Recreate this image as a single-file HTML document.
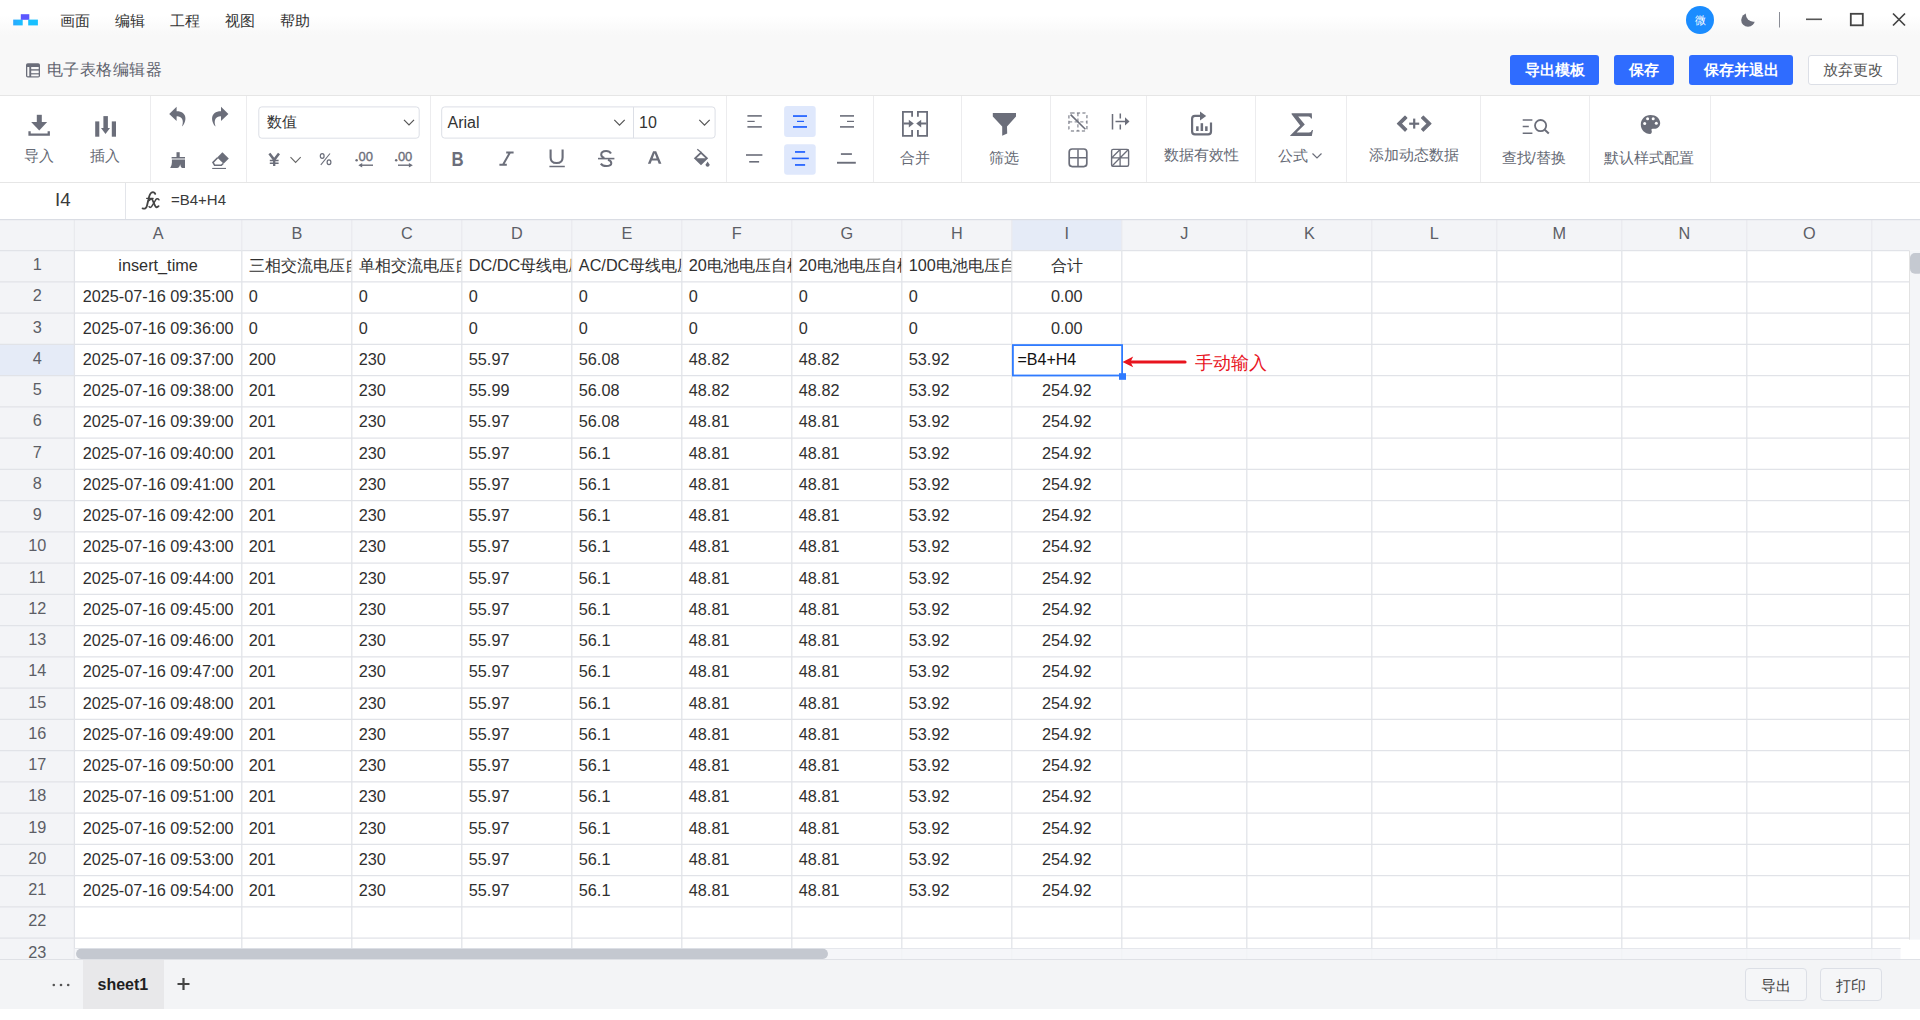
<!DOCTYPE html>
<html><head><meta charset="utf-8"><style>
*{margin:0;padding:0;box-sizing:border-box}
html,body{width:1920px;height:1020px;overflow:hidden;background:#fff;font-family:'Liberation Sans',sans-serif}
.a{position:absolute;white-space:nowrap}
.lbl{position:absolute;font-size:15px;color:#666a75;line-height:15px;white-space:nowrap}
.sep{position:absolute;top:96px;width:1px;height:86px;background:#ececee}
.btn{position:absolute;top:55px;height:30px;border-radius:3px;background:#2f6cff;color:#fff;font-size:15px;line-height:30px;text-align:center;font-weight:bold}
</style></head><body>

<div class="a" style="left:0;top:0;width:1920px;height:40px;background:linear-gradient(#ffffff 0%,#ffffff 38%,#f8f8f8 88%,#f8f8f8 100%)"></div>
<svg class="a" style="left:0;top:0" width="60" height="40">
<defs><linearGradient id="lg1" x1="0" x2="1"><stop offset="0" stop-color="#2aa8ff"/><stop offset="1" stop-color="#19c1ff"/></linearGradient></defs>
<rect x="13.2" y="19.6" width="9.5" height="5.8" fill="url(#lg1)"/>
<rect x="20.8" y="14.2" width="8.5" height="5.6" fill="#5b57ff"/>
<rect x="28.2" y="19.6" width="9.7" height="5.8" fill="#18c0ff"/>
</svg>
<div class="a" style="left:60px;top:13px;font-size:15px;line-height:16px;color:#333">画面</div>
<div class="a" style="left:115px;top:13px;font-size:15px;line-height:16px;color:#333">编辑</div>
<div class="a" style="left:170px;top:13px;font-size:15px;line-height:16px;color:#333">工程</div>
<div class="a" style="left:225px;top:13px;font-size:15px;line-height:16px;color:#333">视图</div>
<div class="a" style="left:280px;top:13px;font-size:15px;line-height:16px;color:#333">帮助</div>
<div class="a" style="left:1686px;top:6px;width:28px;height:28px;border-radius:50%;background:#1a8cff;color:#fff;font-size:11px;line-height:28px;text-align:center">微</div>
<svg class="a" style="left:1730px;top:5px" width="190" height="30">
<mask id="mm"><rect width="40" height="30" fill="#fff"/><circle cx="23.2" cy="9.4" r="7.3" fill="#000"/></mask><circle cx="18" cy="15" r="6.8" fill="#6b6e7a" mask="url(#mm)"/>
<rect x="49" y="7" width="1" height="15.5" fill="#8a8d96"/>
<rect x="76" y="13.5" width="16" height="1.6" fill="#555"/>
<rect x="120.8" y="8.8" width="12" height="11.5" fill="none" stroke="#444" stroke-width="1.8"/>
<path d="M163,8.5 L175,20.5 M175,8.5 L163,20.5" stroke="#444" stroke-width="1.7"/>
</svg>
<div class="a" style="left:0;top:40px;width:1920px;height:56px;background:#f8f8f8;border-bottom:1px solid #e6e6e6"></div>
<svg class="a" style="left:24px;top:61px" width="18" height="18">
<rect x="2" y="2.3" width="14" height="14.2" rx="1.8" fill="#6b6e7a"/>
<rect x="3.3" y="6" width="2" height="9.2" fill="#f8f8f8"/>
<rect x="7.2" y="6" width="7.5" height="2.2" fill="#f8f8f8"/>
<rect x="7.2" y="9.6" width="7.5" height="2.6" fill="#f8f8f8"/>
<rect x="7.2" y="13.4" width="7.5" height="1.9" fill="#f8f8f8"/>
</svg>
<div class="a" style="left:46.6px;top:60.5px;font-size:16.4px;letter-spacing:0.5px;line-height:17px;color:#5f636e">电子表格编辑器</div>
<div class="btn" style="left:1510px;width:89px">导出模板</div>
<div class="btn" style="left:1614px;width:60px">保存</div>
<div class="btn" style="left:1689px;width:104px">保存并退出</div>
<div class="a" style="left:1808px;top:55px;width:90px;height:30px;border-radius:3px;background:#fff;border:1px solid #dcdfe6;color:#555;font-size:15px;line-height:28px;text-align:center">放弃更改</div>
<div class="a" style="left:0;top:96px;width:1920px;height:87px;background:#fff;border-bottom:1px solid #e6e6e6"></div>
<div class="sep" style="left:150px"></div>
<div class="sep" style="left:246px"></div>
<div class="sep" style="left:430px"></div>
<div class="sep" style="left:726px"></div>
<div class="sep" style="left:873px"></div>
<div class="sep" style="left:961px"></div>
<div class="sep" style="left:1050px"></div>
<div class="sep" style="left:1146px"></div>
<div class="sep" style="left:1255px"></div>
<div class="sep" style="left:1346px"></div>
<div class="sep" style="left:1480px"></div>
<div class="sep" style="left:1589px"></div>
<div class="sep" style="left:1710px"></div>
<svg class="a" style="left:0;top:0" width="1920" height="183">
<g fill="#6b6e7a">
<!-- download -->
<rect x="36.8" y="114.8" width="5" height="8"/>
<polygon points="31.2,122 47.2,122 39.2,130.4"/>
<path d="M28.4,131.2 h2.3 v2.2 h16.9 v-2.2 h2.3 v4.6 h-21.5 z"/>
<!-- insert -->
<rect x="95.2" y="121.4" width="4.1" height="15.3"/>
<rect x="111.8" y="121.4" width="4.2" height="15.3"/>
<rect x="103.4" y="116.1" width="4.5" height="12.5"/>
<polygon points="101,128 110,128 105.5,134"/>
<!-- undo / redo -->
<path d="M176.6,106.8 L169.2,114 L176.6,121.1 L176.6,116.4 C180.8,116 184.6,119.5 182,126.6 C186.8,122 188,111.2 176.6,111.2 Z"/>
<path transform="translate(397.6,0) scale(-1,1)" d="M176.6,106.8 L169.2,114 L176.6,121.1 L176.6,116.4 C180.8,116 184.6,119.5 182,126.6 C186.8,122 188,111.2 176.6,111.2 Z"/>
<!-- brush -->
<rect x="176.5" y="152.2" width="3.2" height="5"/>
<rect x="171.6" y="157" width="13.4" height="1.5"/>
<path d="M171.9,159.4 H185 V168 H182.3 Q180.8,167.8 180.5,165.8 L180.2,164.2 Q179.5,167.6 177,168 H170.2 Q171.9,165.5 171.9,162.5 Z"/>
<!-- eraser -->
<polygon points="217.2,157.4 222.4,152.2 228.8,158.5 223.6,163.7"/>
<path d="M217.6,157.8 L213,162.5 L214.6,165.3 H221.3 L223.2,163.5" fill="none" stroke="#6b6e7a" stroke-width="1.6"/>
<rect x="212.2" y="167.9" width="13.8" height="1.1"/>
</g>
<!-- number format dropdown -->
<rect x="258.8" y="106.9" width="160.4" height="31.3" rx="3" fill="none" stroke="#dcdfe6" stroke-width="1"/>
<polyline points="404,119.8 409,125 414,119.8" fill="none" stroke="#555" stroke-width="1.2"/>
<!-- yen -->
<g stroke="#6b6e7a" fill="none">
<path d="M269.4,153.4 L274.2,159.8 L279,153.4" stroke-width="2.5"/>
<path d="M274.2,159.3 V166" stroke-width="2.3"/>
<path d="M269.8,160.4 H278.6 M269.8,163.2 H278.6" stroke-width="1.5"/>
<polyline points="290.5,157.2 295.6,162.4 300.7,157.2" stroke-width="1.1" stroke="#666"/>
<!-- percent -->
<ellipse cx="322.2" cy="156" rx="1.9" ry="2.4" stroke-width="1.2"/>
<ellipse cx="329" cy="162.2" rx="1.9" ry="2.4" stroke-width="1.2"/>
<path d="M320.8,164.8 L330,153.5" stroke-width="1.1"/>
<!-- decimal arrows -->
<path d="M361,165.2 H373" stroke-width="1.4"/>
<path d="M398,165.2 H410" stroke-width="1.4"/>
</g>
<g fill="#6b6e7a">
<polygon points="358.3,165.2 362.2,163 362.2,167.4"/>
<polygon points="412.8,165.2 408.9,163 408.9,167.4"/>
<circle cx="356.6" cy="160.2" r="1.25"/>
<circle cx="396.2" cy="160.2" r="1.25"/>
<text x="358.6" y="161.4" font-size="13" font-family="Liberation Sans" textLength="14.4" stroke="#6b6e7a" stroke-width="0.35">00</text>
<text x="397.9" y="161.4" font-size="13" font-family="Liberation Sans" textLength="14.4" stroke="#6b6e7a" stroke-width="0.35">00</text>
</g>
<!-- font / size dropdown -->
<rect x="441.7" y="106.9" width="273.4" height="31.2" rx="3" fill="none" stroke="#dcdfe6"/>
<rect x="633" y="107" width="1" height="31" fill="#dcdfe6"/>
<polyline points="614.3,119.8 619.5,125.2 624.7,119.8" fill="none" stroke="#555" stroke-width="1.2"/>
<polyline points="699.3,119.8 704.5,125.2 709.7,119.8" fill="none" stroke="#555" stroke-width="1.2"/>
<!-- B I U S A bucket -->
<text x="451.2" y="165.9" font-size="20" font-weight="bold" font-family="Liberation Sans" fill="#6b6e7a" transform="translate(451.6,0) scale(0.84,1) translate(-451.2,0)">B</text>
<g stroke="#6b6e7a" fill="none">
<path d="M506.2,152.4 H513.6 M499.4,164.8 H506.8 M510,152.4 L503,164.8" stroke-width="2"/>
<path d="M550.6,149.5 V157.4 C550.6,161.2 552.8,163 556.6,163 C560.4,163 562.6,161.2 562.6,157.4 V149.5" stroke-width="2.1"/>
<path d="M549.4,166.5 H564.8" stroke-width="1.5"/>
<path d="M611,153.4 C610,151.6 608.2,150.9 606.2,150.9 C603,150.9 601.2,152.6 601.2,154.5 C601.2,156.3 602.4,157.3 604.4,158" stroke-width="2"/>
<path d="M608,159.8 C610.2,160.6 611.3,161.7 611.3,163.3 C611.3,165.2 609.3,166.1 606.3,166.1 C603.9,166.1 602,165.3 600.8,163.6" stroke-width="2"/>
<path d="M598,158.6 H614.4" stroke-width="1.6"/>
</g>
<path fill="#6b6e7a" fill-rule="evenodd" d="M647.9,163.8 L653.1,151.3 H656.2 L661.4,163.8 H658.7 L657.5,160.6 H651.8 L650.6,163.8 Z M652.7,158.4 H656.6 L654.65,153.3 Z"/>
<g fill="#6b6e7a">
<path d="M701,151.4 L708.2,158.3 L701,165.3 L693.8,158.3 Z M701,154 L696.5,158.3 H705.5 Z" fill-rule="evenodd"/>
<path d="M697.3,149.3 L701.2,152.6" stroke="#6b6e7a" stroke-width="1.3"/>
<path d="M707.6,161.5 L709.4,164.3 A1.9,1.9 0 1 1 705.8,164.3 Z"/>
</g>
<!-- align -->
<rect x="784.1" y="106" width="31.6" height="31" rx="3" fill="#dfe8fc"/>
<rect x="784.1" y="144.2" width="31.6" height="30.5" rx="3" fill="#dfe8fc"/>
<g fill="#6b6e7a">
<rect x="747.4" y="115.1" width="14.4" height="1.6"/>
<rect x="747.4" y="120.8" width="7.3" height="1.2"/>
<rect x="747.4" y="126.1" width="14.4" height="1.6"/>
<rect x="840" y="115.1" width="14" height="1.6"/>
<rect x="847" y="120.8" width="7" height="1.2"/>
<rect x="840" y="126.1" width="14" height="1.6"/>
<rect x="746" y="154.2" width="16.4" height="1.6"/>
<rect x="749.2" y="161" width="9.9" height="1.6"/>
<rect x="840.9" y="153.2" width="11" height="1.7"/>
<rect x="837" y="161.8" width="18.8" height="1.9"/>
</g>
<g fill="#1f5fff">
<rect x="793" y="115.2" width="14" height="1.7"/>
<rect x="797" y="120.8" width="7" height="1.2"/>
<rect x="793" y="126.1" width="14" height="1.7"/>
<rect x="795" y="151.1" width="10.1" height="1.7"/>
<rect x="791.8" y="157.6" width="17" height="1.6"/>
<rect x="795" y="164.1" width="10.1" height="1.7"/>
</g>
<!-- merge -->
<g fill="none" stroke="#6b6e7a" stroke-width="1.8">
<path d="M912.1,116.8 V111.9 H902.9 V135.9 H912.1 V130"/>
<path d="M917.9,116.8 V111.9 H927.1 V135.9 H917.9 V130"/>
<path d="M903.5,123.5 H910 M926.5,123.5 H920"/>
</g>
<g fill="#6b6e7a">
<polygon points="913.8,123.5 908.8,119.8 908.8,127.4"/>
<polygon points="916.2,123.5 921.2,119.8 921.2,127.4"/>
<!-- filter -->
<path d="M992.8,113 H1016 V116.6 L1007,126.5 L1007.2,133.6 L1002.2,135.7 V126.5 L992.8,116.6 Z"/>
</g>
<!-- borders -->
<g fill="none" stroke="#6b6e7a">
<rect x="1068.9" y="112.9" width="18" height="18" rx="2.5" stroke-width="1.5" stroke-dasharray="3.2,2.3" opacity="0.7"/>
<path d="M1077.9,113 V131 M1069,121.9 H1087" stroke-width="1.4" stroke-dasharray="3.2,2.4" opacity="0.7"/>
<path d="M1070.6,114.6 L1085.4,129.2" stroke-width="1.6"/>
<path d="M1112.5,114 V129.6 M1120.3,113.4 V118.6 M1120.3,124.4 V129.6 M1115.5,121.4 H1127" stroke-width="1.5"/>
<rect x="1069.2" y="149" width="17.6" height="17.6" rx="3" stroke-width="1.7"/>
<path d="M1078,149.5 V166.5 M1069.5,157.8 H1086.5" stroke-width="1.5"/>
<rect x="1111.6" y="149.4" width="17" height="16.9" rx="1.5" stroke-width="1.4"/>
<path d="M1120.1,149.5 V166.2 M1111.8,157.8 H1128.4 M1111.8,157.8 L1120.1,149.5 M1111.8,166.2 L1128.4,149.5" stroke-width="1.3"/>
</g>
<polygon points="1129.5,121.4 1125,117.2 1125,125.6" fill="#6b6e7a"/>
<!-- data validity -->
<g fill="none" stroke="#6b6e7a" stroke-width="2.2">
<path d="M1200.8,115.9 H1195 Q1192.1,115.9 1192.1,118.8 V131.4 Q1192.1,134.3 1195,134.3 H1208.1 Q1211,134.3 1211,131.4 V122.4"/>
</g>
<g fill="#6b6e7a">
<polygon points="1200,111.6 1206.2,115.9 1200,120.6"/>
<rect x="1196.1" y="126.3" width="2.5" height="4.7"/>
<rect x="1200.6" y="123.2" width="2.5" height="7.8"/>
<rect x="1205.1" y="126.3" width="2.5" height="4.7"/>
<!-- sigma -->
<path d="M1291.6,113.3 H1311.8 L1312,118.6 H1311 Q1310.5,116.6 1308.5,116.6 H1298.2 L1304.8,124.6 L1296.6,132.6 H1309 Q1311.2,132.6 1312,130 H1313 L1311.8,136 H1290.2 V135.5 L1300.2,125.4 L1291.6,114.2 Z"/>
<!-- <+> -->
<path d="M1405,116.2 L1406.8,118 L1401.2,123.6 L1406.8,129.2 L1405,131 L1397.4,123.6 Z" stroke="#6b6e7a" stroke-width="1.2" stroke-linejoin="round"/>
<path d="M1423.4,116.2 L1421.6,118 L1427.2,123.6 L1421.6,129.2 L1423.4,131 L1431,123.6 Z" stroke="#6b6e7a" stroke-width="1.2" stroke-linejoin="round"/>
<rect x="1409.2" y="122.6" width="10" height="2.2"/>
<rect x="1413.1" y="118.6" width="2.2" height="10"/>
</g>
<!-- find -->
<g fill="none" stroke="#6b6e7a">
<path d="M1522.7,119.9 H1532.4 M1522.7,126.6 H1528.8 M1522.7,133.2 H1532.4" stroke-width="1.5"/>
<circle cx="1540.6" cy="125.6" r="5.6" stroke-width="1.8"/>
<path d="M1544.7,129.8 L1548.8,133.6" stroke-width="2"/>
</g>
<!-- palette -->
<path fill="#6b6e7a" d="M1650.5,114.9 C1656,114.9 1660.2,118.4 1660.2,123 C1660.2,126.8 1657.2,128.8 1654.4,128.8 H1652.6 C1651.6,128.8 1651.2,129.6 1651.6,130.6 C1652.1,131.6 1651.9,133.9 1650.1,133.9 C1644.8,133.9 1640.8,129.6 1640.8,124.4 C1640.8,119.1 1645,114.9 1650.5,114.9 Z"/>
<g fill="#fff"><circle cx="1644.7" cy="123.6" r="1.5"/><circle cx="1647.6" cy="118.8" r="1.5"/><circle cx="1653.2" cy="118.8" r="1.5"/><circle cx="1656.3" cy="123.3" r="1.5"/></g>
</svg>
<div class="lbl" style="left:23.8px;top:147.5px">导入</div>
<div class="lbl" style="left:90px;top:147.5px">插入</div>
<div class="lbl" style="left:900px;top:149.8px">合并</div>
<div class="lbl" style="left:988.8px;top:149.5px">筛选</div>
<div class="lbl" style="left:1163.8px;top:146.5px">数据有效性</div>
<div class="lbl" style="left:1277.5px;top:148.3px">公式</div>
<div class="lbl" style="left:1368.7px;top:146.5px">添加动态数据</div>
<div class="lbl" style="left:1501.6px;top:150.1px">查找/替换</div>
<div class="lbl" style="left:1604.3px;top:150.1px">默认样式配置</div>
<svg class="a" style="left:1310.6px;top:150.8px" width="14" height="10"><polyline points="1.5,2.5 6,7 10.5,2.5" fill="none" stroke="#6b6e7a" stroke-width="1.2"/></svg>
<div class="a" style="left:267px;top:113.5px;font-size:15px;line-height:15px;color:#333">数值</div>
<div class="a" style="left:447.5px;top:114.8px;font-size:16px;line-height:16px;color:#333">Arial</div>
<div class="a" style="left:639px;top:115px;font-size:16px;line-height:16px;color:#333">10</div>
<div class="a" style="left:0;top:183px;width:1920px;height:37px;background:#fff;border-bottom:1px solid #dfe1e6"></div>
<div class="a" style="left:125px;top:183px;width:1px;height:36px;background:#e3e5ea"></div>
<div class="a" style="left:55px;top:190px;font-size:18.75px;line-height:19px;color:#3a3a3a">I4</div>
<svg class="a" style="left:0;top:183px" width="200" height="36" viewBox="0 183 200 36"><g fill="none" stroke="#444" stroke-linecap="round">
<path d="M155.2,193.8 C154.6,192.4 153,191.9 151.6,192.5 C149.8,193.4 149.2,195.8 148.5,199.2 L147,205.6 C146.4,208.2 145,209.2 142.6,208.4" stroke-width="1.9"/>
<path d="M146.6,198.3 H153.2" stroke-width="1.2"/>
<path d="M149.4,200.2 C150.6,198.4 152,198.4 152.7,200.3 L155.1,205.8 C155.7,207.5 157.1,207.8 158.6,206.2" stroke-width="1.8"/>
<path d="M159,199.8 C158,198.3 156.6,198.5 155.7,199.8 L151.9,206 C151.1,207.6 149.8,207.8 149.1,206.6" stroke-width="1.5"/>
</g></svg>
<div class="a" style="left:171px;top:192.3px;font-size:15px;line-height:15px;color:#3a3a3a">=B4+H4</div>
<svg class="a" style="left:0;top:219px" width="1920" height="741" viewBox="0 219 1920 741">
<rect x="0" y="219.4" width="1920" height="31.2" fill="#f3f4f7"/>
<rect x="0" y="250.6" width="74.4" height="710" fill="#f3f4f7"/>
<rect x="1011.80" y="219.4" width="110" height="31.2" fill="#e5ebf7"/>
<rect x="0" y="344.35" width="74.4" height="31.25" fill="#e5ebf7"/>
<defs>
<clipPath id="c0"><rect x="74.40" y="219" width="166.80" height="740"/></clipPath>
<clipPath id="c1"><rect x="241.80" y="219" width="109.40" height="740"/></clipPath>
<clipPath id="c2"><rect x="351.80" y="219" width="109.40" height="740"/></clipPath>
<clipPath id="c3"><rect x="461.80" y="219" width="109.40" height="740"/></clipPath>
<clipPath id="c4"><rect x="571.80" y="219" width="109.40" height="740"/></clipPath>
<clipPath id="c5"><rect x="681.80" y="219" width="109.40" height="740"/></clipPath>
<clipPath id="c6"><rect x="791.80" y="219" width="109.40" height="740"/></clipPath>
<clipPath id="c7"><rect x="901.80" y="219" width="109.40" height="740"/></clipPath>
<clipPath id="c8"><rect x="1011.80" y="219" width="109.40" height="740"/></clipPath>
<clipPath id="c9"><rect x="1121.80" y="219" width="124.40" height="740"/></clipPath>
<clipPath id="c10"><rect x="1246.80" y="219" width="124.40" height="740"/></clipPath>
<clipPath id="c11"><rect x="1371.80" y="219" width="124.40" height="740"/></clipPath>
<clipPath id="c12"><rect x="1496.80" y="219" width="124.40" height="740"/></clipPath>
<clipPath id="c13"><rect x="1621.80" y="219" width="124.40" height="740"/></clipPath>
<clipPath id="c14"><rect x="1746.80" y="219" width="124.40" height="740"/></clipPath>
<clipPath id="c15"><rect x="1871.80" y="219" width="124.40" height="740"/></clipPath>
</defs>
<rect x="0" y="249.98" width="1909.5" height="1.25" fill="#e1e3e8"/>
<rect x="0" y="281.23" width="1909.5" height="1.25" fill="#e1e3e8"/>
<rect x="0" y="312.48" width="1909.5" height="1.25" fill="#e1e3e8"/>
<rect x="0" y="343.73" width="1909.5" height="1.25" fill="#e1e3e8"/>
<rect x="0" y="374.98" width="1909.5" height="1.25" fill="#e1e3e8"/>
<rect x="0" y="406.23" width="1909.5" height="1.25" fill="#e1e3e8"/>
<rect x="0" y="437.48" width="1909.5" height="1.25" fill="#e1e3e8"/>
<rect x="0" y="468.73" width="1909.5" height="1.25" fill="#e1e3e8"/>
<rect x="0" y="499.98" width="1909.5" height="1.25" fill="#e1e3e8"/>
<rect x="0" y="531.23" width="1909.5" height="1.25" fill="#e1e3e8"/>
<rect x="0" y="562.48" width="1909.5" height="1.25" fill="#e1e3e8"/>
<rect x="0" y="593.73" width="1909.5" height="1.25" fill="#e1e3e8"/>
<rect x="0" y="624.98" width="1909.5" height="1.25" fill="#e1e3e8"/>
<rect x="0" y="656.23" width="1909.5" height="1.25" fill="#e1e3e8"/>
<rect x="0" y="687.48" width="1909.5" height="1.25" fill="#e1e3e8"/>
<rect x="0" y="718.73" width="1909.5" height="1.25" fill="#e1e3e8"/>
<rect x="0" y="749.98" width="1909.5" height="1.25" fill="#e1e3e8"/>
<rect x="0" y="781.23" width="1909.5" height="1.25" fill="#e1e3e8"/>
<rect x="0" y="812.48" width="1909.5" height="1.25" fill="#e1e3e8"/>
<rect x="0" y="843.73" width="1909.5" height="1.25" fill="#e1e3e8"/>
<rect x="0" y="874.98" width="1909.5" height="1.25" fill="#e1e3e8"/>
<rect x="0" y="906.23" width="1909.5" height="1.25" fill="#e1e3e8"/>
<rect x="0" y="937.48" width="1909.5" height="1.25" fill="#e1e3e8"/>
<rect x="73.78" y="219.4" width="1.25" height="31.2" fill="#e9eaee"/>
<rect x="73.78" y="250.6" width="1.25" height="709" fill="#e1e3e8"/>
<rect x="241.18" y="219.4" width="1.25" height="31.2" fill="#e9eaee"/>
<rect x="241.18" y="250.6" width="1.25" height="709" fill="#e1e3e8"/>
<rect x="351.18" y="219.4" width="1.25" height="31.2" fill="#e9eaee"/>
<rect x="351.18" y="250.6" width="1.25" height="709" fill="#e1e3e8"/>
<rect x="461.18" y="219.4" width="1.25" height="31.2" fill="#e9eaee"/>
<rect x="461.18" y="250.6" width="1.25" height="709" fill="#e1e3e8"/>
<rect x="571.18" y="219.4" width="1.25" height="31.2" fill="#e9eaee"/>
<rect x="571.18" y="250.6" width="1.25" height="709" fill="#e1e3e8"/>
<rect x="681.18" y="219.4" width="1.25" height="31.2" fill="#e9eaee"/>
<rect x="681.18" y="250.6" width="1.25" height="709" fill="#e1e3e8"/>
<rect x="791.18" y="219.4" width="1.25" height="31.2" fill="#e9eaee"/>
<rect x="791.18" y="250.6" width="1.25" height="709" fill="#e1e3e8"/>
<rect x="901.18" y="219.4" width="1.25" height="31.2" fill="#e9eaee"/>
<rect x="901.18" y="250.6" width="1.25" height="709" fill="#e1e3e8"/>
<rect x="1011.18" y="219.4" width="1.25" height="31.2" fill="#e9eaee"/>
<rect x="1011.18" y="250.6" width="1.25" height="709" fill="#e1e3e8"/>
<rect x="1121.18" y="219.4" width="1.25" height="31.2" fill="#e9eaee"/>
<rect x="1121.18" y="250.6" width="1.25" height="709" fill="#e1e3e8"/>
<rect x="1246.18" y="219.4" width="1.25" height="31.2" fill="#e9eaee"/>
<rect x="1246.18" y="250.6" width="1.25" height="709" fill="#e1e3e8"/>
<rect x="1371.18" y="219.4" width="1.25" height="31.2" fill="#e9eaee"/>
<rect x="1371.18" y="250.6" width="1.25" height="709" fill="#e1e3e8"/>
<rect x="1496.18" y="219.4" width="1.25" height="31.2" fill="#e9eaee"/>
<rect x="1496.18" y="250.6" width="1.25" height="709" fill="#e1e3e8"/>
<rect x="1621.18" y="219.4" width="1.25" height="31.2" fill="#e9eaee"/>
<rect x="1621.18" y="250.6" width="1.25" height="709" fill="#e1e3e8"/>
<rect x="1746.18" y="219.4" width="1.25" height="31.2" fill="#e9eaee"/>
<rect x="1746.18" y="250.6" width="1.25" height="709" fill="#e1e3e8"/>
<rect x="1871.18" y="219.4" width="1.25" height="31.2" fill="#e9eaee"/>
<rect x="1871.18" y="250.6" width="1.25" height="709" fill="#e1e3e8"/>
<rect x="0" y="219" width="1920" height="1.2" fill="#dadde4"/>
<text x="158.10" y="238.7" font-size="16.25" fill="#5c5e66" text-anchor="middle">A</text>
<text x="296.80" y="238.7" font-size="16.25" fill="#5c5e66" text-anchor="middle">B</text>
<text x="406.80" y="238.7" font-size="16.25" fill="#5c5e66" text-anchor="middle">C</text>
<text x="516.80" y="238.7" font-size="16.25" fill="#5c5e66" text-anchor="middle">D</text>
<text x="626.80" y="238.7" font-size="16.25" fill="#5c5e66" text-anchor="middle">E</text>
<text x="736.80" y="238.7" font-size="16.25" fill="#5c5e66" text-anchor="middle">F</text>
<text x="846.80" y="238.7" font-size="16.25" fill="#5c5e66" text-anchor="middle">G</text>
<text x="956.80" y="238.7" font-size="16.25" fill="#5c5e66" text-anchor="middle">H</text>
<text x="1066.80" y="238.7" font-size="16.25" fill="#5c5e66" text-anchor="middle">I</text>
<text x="1184.30" y="238.7" font-size="16.25" fill="#5c5e66" text-anchor="middle">J</text>
<text x="1309.30" y="238.7" font-size="16.25" fill="#5c5e66" text-anchor="middle">K</text>
<text x="1434.30" y="238.7" font-size="16.25" fill="#5c5e66" text-anchor="middle">L</text>
<text x="1559.30" y="238.7" font-size="16.25" fill="#5c5e66" text-anchor="middle">M</text>
<text x="1684.30" y="238.7" font-size="16.25" fill="#5c5e66" text-anchor="middle">N</text>
<text x="1809.30" y="238.7" font-size="16.25" fill="#5c5e66" text-anchor="middle">O</text>
<text x="37.2" y="270.12" font-size="16.25" fill="#5c5e66" text-anchor="middle">1</text>
<text x="37.2" y="301.38" font-size="16.25" fill="#5c5e66" text-anchor="middle">2</text>
<text x="37.2" y="332.62" font-size="16.25" fill="#5c5e66" text-anchor="middle">3</text>
<text x="37.2" y="363.88" font-size="16.25" fill="#5c5e66" text-anchor="middle">4</text>
<text x="37.2" y="395.12" font-size="16.25" fill="#5c5e66" text-anchor="middle">5</text>
<text x="37.2" y="426.38" font-size="16.25" fill="#5c5e66" text-anchor="middle">6</text>
<text x="37.2" y="457.62" font-size="16.25" fill="#5c5e66" text-anchor="middle">7</text>
<text x="37.2" y="488.88" font-size="16.25" fill="#5c5e66" text-anchor="middle">8</text>
<text x="37.2" y="520.12" font-size="16.25" fill="#5c5e66" text-anchor="middle">9</text>
<text x="37.2" y="551.38" font-size="16.25" fill="#5c5e66" text-anchor="middle">10</text>
<text x="37.2" y="582.62" font-size="16.25" fill="#5c5e66" text-anchor="middle">11</text>
<text x="37.2" y="613.88" font-size="16.25" fill="#5c5e66" text-anchor="middle">12</text>
<text x="37.2" y="645.12" font-size="16.25" fill="#5c5e66" text-anchor="middle">13</text>
<text x="37.2" y="676.38" font-size="16.25" fill="#5c5e66" text-anchor="middle">14</text>
<text x="37.2" y="707.62" font-size="16.25" fill="#5c5e66" text-anchor="middle">15</text>
<text x="37.2" y="738.88" font-size="16.25" fill="#5c5e66" text-anchor="middle">16</text>
<text x="37.2" y="770.12" font-size="16.25" fill="#5c5e66" text-anchor="middle">17</text>
<text x="37.2" y="801.38" font-size="16.25" fill="#5c5e66" text-anchor="middle">18</text>
<text x="37.2" y="832.62" font-size="16.25" fill="#5c5e66" text-anchor="middle">19</text>
<text x="37.2" y="863.88" font-size="16.25" fill="#5c5e66" text-anchor="middle">20</text>
<text x="37.2" y="895.12" font-size="16.25" fill="#5c5e66" text-anchor="middle">21</text>
<text x="37.2" y="926.38" font-size="16.25" fill="#5c5e66" text-anchor="middle">22</text>
<text x="37.2" y="957.62" font-size="16.25" fill="#5c5e66" text-anchor="middle">23</text>
<text x="158.10" y="271.23" font-size="16.25" fill="#303030" text-anchor="middle">insert_time</text>
<text x="248.80" y="271.23" font-size="16.25" fill="#303030" clip-path="url(#c1)">三相交流电压自动采集</text>
<text x="358.80" y="271.23" font-size="16.25" fill="#303030" clip-path="url(#c2)">单相交流电压自动采集</text>
<text x="468.80" y="271.23" font-size="16.25" fill="#303030" clip-path="url(#c3)">DC/DC母线电压自动</text>
<text x="578.80" y="271.23" font-size="16.25" fill="#303030" clip-path="url(#c4)">AC/DC母线电压自动</text>
<text x="688.80" y="271.23" font-size="16.25" fill="#303030" clip-path="url(#c5)">20电池电压自检</text>
<text x="798.80" y="271.23" font-size="16.25" fill="#303030" clip-path="url(#c6)">20电池电压自检</text>
<text x="908.80" y="271.23" font-size="16.25" fill="#303030" clip-path="url(#c7)">100电池电压自检</text>
<text x="1066.80" y="271.23" font-size="16.25" fill="#303030" text-anchor="middle">合计</text>
<text x="158.10" y="302.48" font-size="16.25" fill="#303030" text-anchor="middle">2025-07-16 09:35:00</text>
<text x="248.80" y="302.48" font-size="16.25" fill="#303030">0</text>
<text x="358.80" y="302.48" font-size="16.25" fill="#303030">0</text>
<text x="468.80" y="302.48" font-size="16.25" fill="#303030">0</text>
<text x="578.80" y="302.48" font-size="16.25" fill="#303030">0</text>
<text x="688.80" y="302.48" font-size="16.25" fill="#303030">0</text>
<text x="798.80" y="302.48" font-size="16.25" fill="#303030">0</text>
<text x="908.80" y="302.48" font-size="16.25" fill="#303030">0</text>
<text x="1066.80" y="302.48" font-size="16.25" fill="#303030" text-anchor="middle">0.00</text>
<text x="158.10" y="333.73" font-size="16.25" fill="#303030" text-anchor="middle">2025-07-16 09:36:00</text>
<text x="248.80" y="333.73" font-size="16.25" fill="#303030">0</text>
<text x="358.80" y="333.73" font-size="16.25" fill="#303030">0</text>
<text x="468.80" y="333.73" font-size="16.25" fill="#303030">0</text>
<text x="578.80" y="333.73" font-size="16.25" fill="#303030">0</text>
<text x="688.80" y="333.73" font-size="16.25" fill="#303030">0</text>
<text x="798.80" y="333.73" font-size="16.25" fill="#303030">0</text>
<text x="908.80" y="333.73" font-size="16.25" fill="#303030">0</text>
<text x="1066.80" y="333.73" font-size="16.25" fill="#303030" text-anchor="middle">0.00</text>
<text x="158.10" y="364.98" font-size="16.25" fill="#303030" text-anchor="middle">2025-07-16 09:37:00</text>
<text x="248.80" y="364.98" font-size="16.25" fill="#303030">200</text>
<text x="358.80" y="364.98" font-size="16.25" fill="#303030">230</text>
<text x="468.80" y="364.98" font-size="16.25" fill="#303030">55.97</text>
<text x="578.80" y="364.98" font-size="16.25" fill="#303030">56.08</text>
<text x="688.80" y="364.98" font-size="16.25" fill="#303030">48.82</text>
<text x="798.80" y="364.98" font-size="16.25" fill="#303030">48.82</text>
<text x="908.80" y="364.98" font-size="16.25" fill="#303030">53.92</text>
<text x="158.10" y="396.23" font-size="16.25" fill="#303030" text-anchor="middle">2025-07-16 09:38:00</text>
<text x="248.80" y="396.23" font-size="16.25" fill="#303030">201</text>
<text x="358.80" y="396.23" font-size="16.25" fill="#303030">230</text>
<text x="468.80" y="396.23" font-size="16.25" fill="#303030">55.99</text>
<text x="578.80" y="396.23" font-size="16.25" fill="#303030">56.08</text>
<text x="688.80" y="396.23" font-size="16.25" fill="#303030">48.82</text>
<text x="798.80" y="396.23" font-size="16.25" fill="#303030">48.82</text>
<text x="908.80" y="396.23" font-size="16.25" fill="#303030">53.92</text>
<text x="1066.80" y="396.23" font-size="16.25" fill="#303030" text-anchor="middle">254.92</text>
<text x="158.10" y="427.48" font-size="16.25" fill="#303030" text-anchor="middle">2025-07-16 09:39:00</text>
<text x="248.80" y="427.48" font-size="16.25" fill="#303030">201</text>
<text x="358.80" y="427.48" font-size="16.25" fill="#303030">230</text>
<text x="468.80" y="427.48" font-size="16.25" fill="#303030">55.97</text>
<text x="578.80" y="427.48" font-size="16.25" fill="#303030">56.08</text>
<text x="688.80" y="427.48" font-size="16.25" fill="#303030">48.81</text>
<text x="798.80" y="427.48" font-size="16.25" fill="#303030">48.81</text>
<text x="908.80" y="427.48" font-size="16.25" fill="#303030">53.92</text>
<text x="1066.80" y="427.48" font-size="16.25" fill="#303030" text-anchor="middle">254.92</text>
<text x="158.10" y="458.73" font-size="16.25" fill="#303030" text-anchor="middle">2025-07-16 09:40:00</text>
<text x="248.80" y="458.73" font-size="16.25" fill="#303030">201</text>
<text x="358.80" y="458.73" font-size="16.25" fill="#303030">230</text>
<text x="468.80" y="458.73" font-size="16.25" fill="#303030">55.97</text>
<text x="578.80" y="458.73" font-size="16.25" fill="#303030">56.1</text>
<text x="688.80" y="458.73" font-size="16.25" fill="#303030">48.81</text>
<text x="798.80" y="458.73" font-size="16.25" fill="#303030">48.81</text>
<text x="908.80" y="458.73" font-size="16.25" fill="#303030">53.92</text>
<text x="1066.80" y="458.73" font-size="16.25" fill="#303030" text-anchor="middle">254.92</text>
<text x="158.10" y="489.98" font-size="16.25" fill="#303030" text-anchor="middle">2025-07-16 09:41:00</text>
<text x="248.80" y="489.98" font-size="16.25" fill="#303030">201</text>
<text x="358.80" y="489.98" font-size="16.25" fill="#303030">230</text>
<text x="468.80" y="489.98" font-size="16.25" fill="#303030">55.97</text>
<text x="578.80" y="489.98" font-size="16.25" fill="#303030">56.1</text>
<text x="688.80" y="489.98" font-size="16.25" fill="#303030">48.81</text>
<text x="798.80" y="489.98" font-size="16.25" fill="#303030">48.81</text>
<text x="908.80" y="489.98" font-size="16.25" fill="#303030">53.92</text>
<text x="1066.80" y="489.98" font-size="16.25" fill="#303030" text-anchor="middle">254.92</text>
<text x="158.10" y="521.23" font-size="16.25" fill="#303030" text-anchor="middle">2025-07-16 09:42:00</text>
<text x="248.80" y="521.23" font-size="16.25" fill="#303030">201</text>
<text x="358.80" y="521.23" font-size="16.25" fill="#303030">230</text>
<text x="468.80" y="521.23" font-size="16.25" fill="#303030">55.97</text>
<text x="578.80" y="521.23" font-size="16.25" fill="#303030">56.1</text>
<text x="688.80" y="521.23" font-size="16.25" fill="#303030">48.81</text>
<text x="798.80" y="521.23" font-size="16.25" fill="#303030">48.81</text>
<text x="908.80" y="521.23" font-size="16.25" fill="#303030">53.92</text>
<text x="1066.80" y="521.23" font-size="16.25" fill="#303030" text-anchor="middle">254.92</text>
<text x="158.10" y="552.48" font-size="16.25" fill="#303030" text-anchor="middle">2025-07-16 09:43:00</text>
<text x="248.80" y="552.48" font-size="16.25" fill="#303030">201</text>
<text x="358.80" y="552.48" font-size="16.25" fill="#303030">230</text>
<text x="468.80" y="552.48" font-size="16.25" fill="#303030">55.97</text>
<text x="578.80" y="552.48" font-size="16.25" fill="#303030">56.1</text>
<text x="688.80" y="552.48" font-size="16.25" fill="#303030">48.81</text>
<text x="798.80" y="552.48" font-size="16.25" fill="#303030">48.81</text>
<text x="908.80" y="552.48" font-size="16.25" fill="#303030">53.92</text>
<text x="1066.80" y="552.48" font-size="16.25" fill="#303030" text-anchor="middle">254.92</text>
<text x="158.10" y="583.73" font-size="16.25" fill="#303030" text-anchor="middle">2025-07-16 09:44:00</text>
<text x="248.80" y="583.73" font-size="16.25" fill="#303030">201</text>
<text x="358.80" y="583.73" font-size="16.25" fill="#303030">230</text>
<text x="468.80" y="583.73" font-size="16.25" fill="#303030">55.97</text>
<text x="578.80" y="583.73" font-size="16.25" fill="#303030">56.1</text>
<text x="688.80" y="583.73" font-size="16.25" fill="#303030">48.81</text>
<text x="798.80" y="583.73" font-size="16.25" fill="#303030">48.81</text>
<text x="908.80" y="583.73" font-size="16.25" fill="#303030">53.92</text>
<text x="1066.80" y="583.73" font-size="16.25" fill="#303030" text-anchor="middle">254.92</text>
<text x="158.10" y="614.98" font-size="16.25" fill="#303030" text-anchor="middle">2025-07-16 09:45:00</text>
<text x="248.80" y="614.98" font-size="16.25" fill="#303030">201</text>
<text x="358.80" y="614.98" font-size="16.25" fill="#303030">230</text>
<text x="468.80" y="614.98" font-size="16.25" fill="#303030">55.97</text>
<text x="578.80" y="614.98" font-size="16.25" fill="#303030">56.1</text>
<text x="688.80" y="614.98" font-size="16.25" fill="#303030">48.81</text>
<text x="798.80" y="614.98" font-size="16.25" fill="#303030">48.81</text>
<text x="908.80" y="614.98" font-size="16.25" fill="#303030">53.92</text>
<text x="1066.80" y="614.98" font-size="16.25" fill="#303030" text-anchor="middle">254.92</text>
<text x="158.10" y="646.23" font-size="16.25" fill="#303030" text-anchor="middle">2025-07-16 09:46:00</text>
<text x="248.80" y="646.23" font-size="16.25" fill="#303030">201</text>
<text x="358.80" y="646.23" font-size="16.25" fill="#303030">230</text>
<text x="468.80" y="646.23" font-size="16.25" fill="#303030">55.97</text>
<text x="578.80" y="646.23" font-size="16.25" fill="#303030">56.1</text>
<text x="688.80" y="646.23" font-size="16.25" fill="#303030">48.81</text>
<text x="798.80" y="646.23" font-size="16.25" fill="#303030">48.81</text>
<text x="908.80" y="646.23" font-size="16.25" fill="#303030">53.92</text>
<text x="1066.80" y="646.23" font-size="16.25" fill="#303030" text-anchor="middle">254.92</text>
<text x="158.10" y="677.48" font-size="16.25" fill="#303030" text-anchor="middle">2025-07-16 09:47:00</text>
<text x="248.80" y="677.48" font-size="16.25" fill="#303030">201</text>
<text x="358.80" y="677.48" font-size="16.25" fill="#303030">230</text>
<text x="468.80" y="677.48" font-size="16.25" fill="#303030">55.97</text>
<text x="578.80" y="677.48" font-size="16.25" fill="#303030">56.1</text>
<text x="688.80" y="677.48" font-size="16.25" fill="#303030">48.81</text>
<text x="798.80" y="677.48" font-size="16.25" fill="#303030">48.81</text>
<text x="908.80" y="677.48" font-size="16.25" fill="#303030">53.92</text>
<text x="1066.80" y="677.48" font-size="16.25" fill="#303030" text-anchor="middle">254.92</text>
<text x="158.10" y="708.73" font-size="16.25" fill="#303030" text-anchor="middle">2025-07-16 09:48:00</text>
<text x="248.80" y="708.73" font-size="16.25" fill="#303030">201</text>
<text x="358.80" y="708.73" font-size="16.25" fill="#303030">230</text>
<text x="468.80" y="708.73" font-size="16.25" fill="#303030">55.97</text>
<text x="578.80" y="708.73" font-size="16.25" fill="#303030">56.1</text>
<text x="688.80" y="708.73" font-size="16.25" fill="#303030">48.81</text>
<text x="798.80" y="708.73" font-size="16.25" fill="#303030">48.81</text>
<text x="908.80" y="708.73" font-size="16.25" fill="#303030">53.92</text>
<text x="1066.80" y="708.73" font-size="16.25" fill="#303030" text-anchor="middle">254.92</text>
<text x="158.10" y="739.98" font-size="16.25" fill="#303030" text-anchor="middle">2025-07-16 09:49:00</text>
<text x="248.80" y="739.98" font-size="16.25" fill="#303030">201</text>
<text x="358.80" y="739.98" font-size="16.25" fill="#303030">230</text>
<text x="468.80" y="739.98" font-size="16.25" fill="#303030">55.97</text>
<text x="578.80" y="739.98" font-size="16.25" fill="#303030">56.1</text>
<text x="688.80" y="739.98" font-size="16.25" fill="#303030">48.81</text>
<text x="798.80" y="739.98" font-size="16.25" fill="#303030">48.81</text>
<text x="908.80" y="739.98" font-size="16.25" fill="#303030">53.92</text>
<text x="1066.80" y="739.98" font-size="16.25" fill="#303030" text-anchor="middle">254.92</text>
<text x="158.10" y="771.23" font-size="16.25" fill="#303030" text-anchor="middle">2025-07-16 09:50:00</text>
<text x="248.80" y="771.23" font-size="16.25" fill="#303030">201</text>
<text x="358.80" y="771.23" font-size="16.25" fill="#303030">230</text>
<text x="468.80" y="771.23" font-size="16.25" fill="#303030">55.97</text>
<text x="578.80" y="771.23" font-size="16.25" fill="#303030">56.1</text>
<text x="688.80" y="771.23" font-size="16.25" fill="#303030">48.81</text>
<text x="798.80" y="771.23" font-size="16.25" fill="#303030">48.81</text>
<text x="908.80" y="771.23" font-size="16.25" fill="#303030">53.92</text>
<text x="1066.80" y="771.23" font-size="16.25" fill="#303030" text-anchor="middle">254.92</text>
<text x="158.10" y="802.48" font-size="16.25" fill="#303030" text-anchor="middle">2025-07-16 09:51:00</text>
<text x="248.80" y="802.48" font-size="16.25" fill="#303030">201</text>
<text x="358.80" y="802.48" font-size="16.25" fill="#303030">230</text>
<text x="468.80" y="802.48" font-size="16.25" fill="#303030">55.97</text>
<text x="578.80" y="802.48" font-size="16.25" fill="#303030">56.1</text>
<text x="688.80" y="802.48" font-size="16.25" fill="#303030">48.81</text>
<text x="798.80" y="802.48" font-size="16.25" fill="#303030">48.81</text>
<text x="908.80" y="802.48" font-size="16.25" fill="#303030">53.92</text>
<text x="1066.80" y="802.48" font-size="16.25" fill="#303030" text-anchor="middle">254.92</text>
<text x="158.10" y="833.73" font-size="16.25" fill="#303030" text-anchor="middle">2025-07-16 09:52:00</text>
<text x="248.80" y="833.73" font-size="16.25" fill="#303030">201</text>
<text x="358.80" y="833.73" font-size="16.25" fill="#303030">230</text>
<text x="468.80" y="833.73" font-size="16.25" fill="#303030">55.97</text>
<text x="578.80" y="833.73" font-size="16.25" fill="#303030">56.1</text>
<text x="688.80" y="833.73" font-size="16.25" fill="#303030">48.81</text>
<text x="798.80" y="833.73" font-size="16.25" fill="#303030">48.81</text>
<text x="908.80" y="833.73" font-size="16.25" fill="#303030">53.92</text>
<text x="1066.80" y="833.73" font-size="16.25" fill="#303030" text-anchor="middle">254.92</text>
<text x="158.10" y="864.98" font-size="16.25" fill="#303030" text-anchor="middle">2025-07-16 09:53:00</text>
<text x="248.80" y="864.98" font-size="16.25" fill="#303030">201</text>
<text x="358.80" y="864.98" font-size="16.25" fill="#303030">230</text>
<text x="468.80" y="864.98" font-size="16.25" fill="#303030">55.97</text>
<text x="578.80" y="864.98" font-size="16.25" fill="#303030">56.1</text>
<text x="688.80" y="864.98" font-size="16.25" fill="#303030">48.81</text>
<text x="798.80" y="864.98" font-size="16.25" fill="#303030">48.81</text>
<text x="908.80" y="864.98" font-size="16.25" fill="#303030">53.92</text>
<text x="1066.80" y="864.98" font-size="16.25" fill="#303030" text-anchor="middle">254.92</text>
<text x="158.10" y="896.23" font-size="16.25" fill="#303030" text-anchor="middle">2025-07-16 09:54:00</text>
<text x="248.80" y="896.23" font-size="16.25" fill="#303030">201</text>
<text x="358.80" y="896.23" font-size="16.25" fill="#303030">230</text>
<text x="468.80" y="896.23" font-size="16.25" fill="#303030">55.97</text>
<text x="578.80" y="896.23" font-size="16.25" fill="#303030">56.1</text>
<text x="688.80" y="896.23" font-size="16.25" fill="#303030">48.81</text>
<text x="798.80" y="896.23" font-size="16.25" fill="#303030">48.81</text>
<text x="908.80" y="896.23" font-size="16.25" fill="#303030">53.92</text>
<text x="1066.80" y="896.23" font-size="16.25" fill="#303030" text-anchor="middle">254.92</text>
<rect x="1012.90" y="345.1" width="109.2" height="30.4" fill="#fff" stroke="#2f7bff" stroke-width="1.8"/>
<rect x="1119" y="373.2" width="7" height="6.6" fill="#2f7bff"/>
<text x="1017.5" y="365" font-size="16" fill="#111">=B4+H4</text>
<path d="M1129,362 H1185" stroke="#e8141e" stroke-width="3.2" stroke-linecap="round"/>
<polygon points="1122.5,362 1133.2,356.6 1130.5,362 1133.2,367.2" fill="#e8141e"/>
<text x="1194.5" y="368.5" font-size="18" fill="#e8141e">手动输入</text>
<rect x="1909.5" y="250.6" width="10.5" height="689" fill="#f4f5f8"/>
<rect x="1909" y="250.6" width="1" height="689" fill="#e2e2e2"/>
<rect x="1910" y="253" width="14" height="20.7" rx="5" fill="#c5c9d1"/>
<rect x="74.4" y="948.4" width="1826.35" height="10.8" fill="#f3f4f8" opacity="0.85"/>
<rect x="74.4" y="948" width="1826.35" height="0.9" fill="#e3e5ea"/>
<rect x="76" y="948.7" width="752" height="10.2" rx="5.1" fill="#c4c8d0"/>
<rect x="1900.75" y="948.4" width="19.25" height="10.8" fill="#fff"/>
</svg>
<div class="a" style="left:0;top:959px;width:1920px;height:50px;background:#f3f4f6;border-top:1px solid #dfe1e6"></div>
<div class="a" style="left:83px;top:960px;width:81px;height:49px;background:#e8e8ea"></div>
<div class="a" style="left:97.5px;top:976px;font-size:16px;line-height:18px;font-weight:bold;color:#1f1f1f">sheet1</div>
<svg class="a" style="left:40px;top:970px" width="160" height="30">
<g fill="#555"><circle cx="13.8" cy="15" r="1.3"/><circle cx="21" cy="15" r="1.3"/><circle cx="28.2" cy="15" r="1.3"/></g>
<path d="M137.5,14 H149.5 M143.5,8 V20" stroke="#444" stroke-width="2.2"/>
</svg>
<div class="a" style="left:1745.2px;top:968px;width:62px;height:32.5px;border:1px solid #dcdfe6;border-radius:4px;background:#f5f6f8;color:#444;font-size:15px;line-height:33px;text-align:center">导出</div>
<div class="a" style="left:1820.2px;top:968px;width:62px;height:32.5px;border:1px solid #dcdfe6;border-radius:4px;background:#f5f6f8;color:#444;font-size:15px;line-height:33px;text-align:center">打印</div>
</body></html>
